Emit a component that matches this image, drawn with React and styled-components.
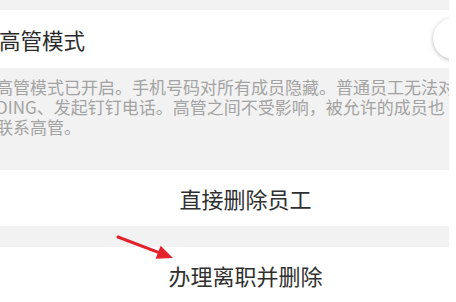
import React from 'react';
import styled, { createGlobalStyle } from 'styled-components';

const GlobalStyle = createGlobalStyle`
  html, body {
    margin: 0;
    padding: 0;
    background: #ffffff;
  }
  body {
    font-family: "PingFang SC", "Noto Sans CJK SC", "Noto Sans", sans-serif;
  }
`

const Frame = styled.div`
  position: relative;
  width: 449px;
  height: 302px;
  overflow: hidden;
  background: #f2f2f2;
  display: flex;
  flex-direction: column;
`

const Gap = styled.div`
  height: ${props => props.h}px;
  flex-shrink: 0;
`

const SwitchRow = styled.div`
  height: 58px;
  flex-shrink: 0;
  background: #ffffff;
  display: flex;
  align-items: center;
  justify-content: space-between;
`

const Title = styled.span`
  margin-left: -1px;
  font-size: 21.5px;
  color: #2b2b2b;
`

const Knob = styled.div`
  width: 41px;
  height: 41px;
  margin-right: -25px;
  margin-top: -2px;
  border-radius: 50%;
  background: #ffffff;
  box-shadow: 0 1px 4px rgba(0, 0, 0, 0.28);
`

const Description = styled.div`
  height: 102px;
  flex-shrink: 0;
  box-sizing: border-box;
  padding-top: 9px;
  margin-left: -4px;
  font-size: 17px;
  line-height: 20px;
  color: #a3a3a3;
  white-space: nowrap;

  span {
    display: block;
  }
`

const ActionRow = styled.div`
  height: 56px;
  flex-shrink: 0;
  background: #ffffff;
  display: flex;
  align-items: center;
  justify-content: center;
  padding-left: 42px;
  font-size: 22px;
  color: #2f2f2f;
`

const Arrow = styled.svg`
  position: absolute;
  left: 114px;
  top: 232px;
  width: 64px;
  height: 32px;
`

function App() {
  return (
    <>
      <GlobalStyle />
      <Frame>
        <Gap h={10} />
        <SwitchRow>
          <Title>高管模式</Title>
          <Knob />
        </SwitchRow>
        <Description>
          <span>高管模式已开启。手机号码对所有成员隐藏。普通员工无法对</span>
          <span>DING、发起钉钉电话。高管之间不受影响，被允许的成员也</span>
          <span>联系高管。</span>
        </Description>
        <ActionRow>直接删除员工</ActionRow>
        <Gap h={21} />
        <ActionRow>办理离职并删除</ActionRow>

        <Arrow viewBox="0 0 64 32">
          <line x1="4" y1="5" x2="45" y2="20.6" stroke="#e3232b" strokeWidth="3" strokeLinecap="round" />
          <polygon points="59,26 41.6,26.8 46.6,13.8" fill="#e3232b" />
        </Arrow>
      </Frame>
    </>
  )
}

export default App;
